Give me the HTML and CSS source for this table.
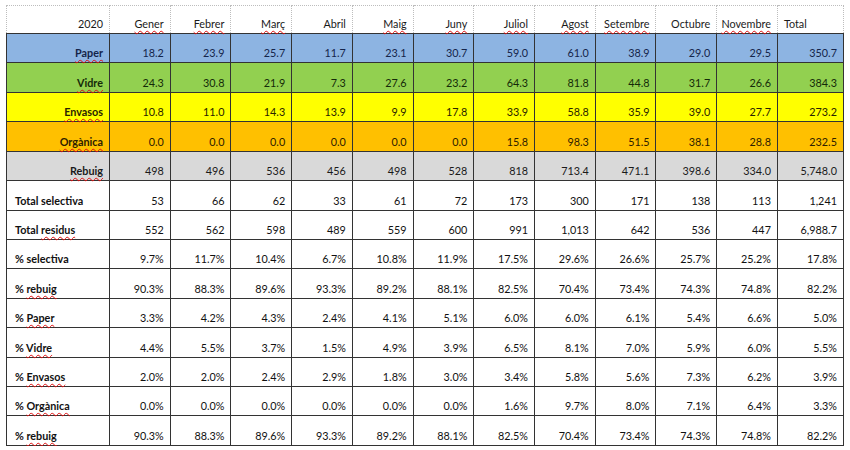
FILE: index.html
```html
<!DOCTYPE html>
<html lang="ca">
<head>
<meta charset="utf-8">
<title>Residus 2020</title>
<link rel="stylesheet" href="styles.css">
</head>
<body>
<table class="sheet">
  <colgroup>
    <col class="c-label">
    <col class="c-m"><col class="c-m"><col class="c-m"><col class="c-m"><col class="c-m"><col class="c-m">
    <col class="c-m"><col class="c-m"><col class="c-m"><col class="c-m"><col class="c-m">
    <col class="c-total">
  </colgroup>
  <thead>
    <tr class="head">
      <td>2020</td><td><u class="sp">Gener</u></td><td><u class="sp">Febrer</u></td><td><u class="sp">Març</u></td><td>Abril</td><td><u class="sp">Maig</u></td><td><u class="sp">Juny</u></td><td><u class="sp">Juliol</u></td><td><u class="sp">Agost</u></td><td><u class="sp">Setembre</u></td><td>Octubre</td><td><u class="sp">Novembre</u></td><td class="left">Total</td>
    </tr>
  </thead>
  <tbody>
    <tr class="paper">
      <th><u class="sp">Paper</u></th><td>18.2</td><td>23.9</td><td>25.7</td><td>11.7</td><td>23.1</td><td>30.7</td><td>59.0</td><td>61.0</td><td>38.9</td><td>29.0</td><td>29.5</td><td>350.7</td>
    </tr>
    <tr class="vidre">
      <th><u class="sp">Vidre</u></th><td>24.3</td><td>30.8</td><td>21.9</td><td>7.3</td><td>27.6</td><td>23.2</td><td>64.3</td><td>81.8</td><td>44.8</td><td>31.7</td><td>26.6</td><td>384.3</td>
    </tr>
    <tr class="envasos">
      <th><u class="sp">Envasos</u></th><td>10.8</td><td>11.0</td><td>14.3</td><td>13.9</td><td>9.9</td><td>17.8</td><td>33.9</td><td>58.8</td><td>35.9</td><td>39.0</td><td>27.7</td><td>273.2</td>
    </tr>
    <tr class="organica">
      <th><u class="sp">Orgànica</u></th><td>0.0</td><td>0.0</td><td>0.0</td><td>0.0</td><td>0.0</td><td>0.0</td><td>15.8</td><td>98.3</td><td>51.5</td><td>38.1</td><td>28.8</td><td>232.5</td>
    </tr>
    <tr class="rebuig">
      <th><u class="sp">Rebuig</u></th><td>498</td><td>496</td><td>536</td><td>456</td><td>498</td><td>528</td><td>818</td><td>713.4</td><td>471.1</td><td>398.6</td><td>334.0</td><td>5,748.0</td>
    </tr>
    <tr class="plain">
      <th>Total selectiva</th><td>53</td><td>66</td><td>62</td><td>33</td><td>61</td><td>72</td><td>173</td><td>300</td><td>171</td><td>138</td><td>113</td><td>1,241</td>
    </tr>
    <tr class="plain">
      <th>Total <u class="sp">residus</u></th><td>552</td><td>562</td><td>598</td><td>489</td><td>559</td><td>600</td><td>991</td><td>1,013</td><td>642</td><td>536</td><td>447</td><td>6,988.7</td>
    </tr>
    <tr class="plain">
      <th>% selectiva</th><td>9.7%</td><td>11.7%</td><td>10.4%</td><td>6.7%</td><td>10.8%</td><td>11.9%</td><td>17.5%</td><td>29.6%</td><td>26.6%</td><td>25.7%</td><td>25.2%</td><td>17.8%</td>
    </tr>
    <tr class="plain">
      <th>% <u class="sp">rebuig</u></th><td>90.3%</td><td>88.3%</td><td>89.6%</td><td>93.3%</td><td>89.2%</td><td>88.1%</td><td>82.5%</td><td>70.4%</td><td>73.4%</td><td>74.3%</td><td>74.8%</td><td>82.2%</td>
    </tr>
    <tr class="plain">
      <th>% <u class="sp">Paper</u></th><td>3.3%</td><td>4.2%</td><td>4.3%</td><td>2.4%</td><td>4.1%</td><td>5.1%</td><td>6.0%</td><td>6.0%</td><td>6.1%</td><td>5.4%</td><td>6.6%</td><td>5.0%</td>
    </tr>
    <tr class="plain">
      <th>% <u class="sp">Vidre</u></th><td>4.4%</td><td>5.5%</td><td>3.7%</td><td>1.5%</td><td>4.9%</td><td>3.9%</td><td>6.5%</td><td>8.1%</td><td>7.0%</td><td>5.9%</td><td>6.0%</td><td>5.5%</td>
    </tr>
    <tr class="plain">
      <th>% <u class="sp">Envasos</u></th><td>2.0%</td><td>2.0%</td><td>2.4%</td><td>2.9%</td><td>1.8%</td><td>3.0%</td><td>3.4%</td><td>5.8%</td><td>5.6%</td><td>7.3%</td><td>6.2%</td><td>3.9%</td>
    </tr>
    <tr class="plain">
      <th>% <u class="sp">Orgànica</u></th><td>0.0%</td><td>0.0%</td><td>0.0%</td><td>0.0%</td><td>0.0%</td><td>0.0%</td><td>1.6%</td><td>9.7%</td><td>8.0%</td><td>7.1%</td><td>6.4%</td><td>3.3%</td>
    </tr>
    <tr class="plain">
      <th>% <u class="sp">rebuig</u></th><td>90.3%</td><td>88.3%</td><td>89.6%</td><td>93.3%</td><td>89.2%</td><td>88.1%</td><td>82.5%</td><td>70.4%</td><td>73.4%</td><td>74.3%</td><td>74.8%</td><td>82.2%</td>
    </tr>
  </tbody>
</table>
</body>
</html>
```

FILE: styles.css
```css
html, body {
  margin: 0;
  background: #ffffff;
}

body {
  padding: 5px 0 0 6px;
  font-family: Lato, "Open Sans", "DejaVu Sans", sans-serif;
  font-size: 10.8px;
  color: #111111;
}

.sheet {
  border-collapse: collapse;
  table-layout: fixed;
  width: 837px;
}

.c-label { width: 103px; }
.c-m { width: 60.73px; }
.c-total { width: 66px; }

.sheet td,
.sheet th {
  border: 1px solid #333333;
  height: 25.43px;
  padding: 0 6px 3px 4px;
  vertical-align: bottom;
  text-align: right;
  white-space: nowrap;
  line-height: 12px;
  font-weight: 400;
}

.sheet th {
  font-weight: 700;
}

.head td {
  border: 1px dotted #bdbdbd;
  border-bottom: 1px solid #333333;
  height: 24px;
  color: #1a1a1a;
}

.head td.left {
  text-align: left;
  padding-left: 6px;
}

.sp {
  text-decoration: underline wavy #e01010;
  text-decoration-thickness: 1px;
  text-underline-offset: 2px;
}

.paper { background: #8db4e2; color: #14244a; }
.vidre { background: #92d050; color: #142a08; }
.envasos { background: #ffff00; color: #2a2400; }
.organica { background: #ffc000; color: #2e2000; }
.rebuig { background: #d9d9d9; color: #1a1a1a; }

.plain th {
  text-align: left;
  padding-left: 8px;
}
```
